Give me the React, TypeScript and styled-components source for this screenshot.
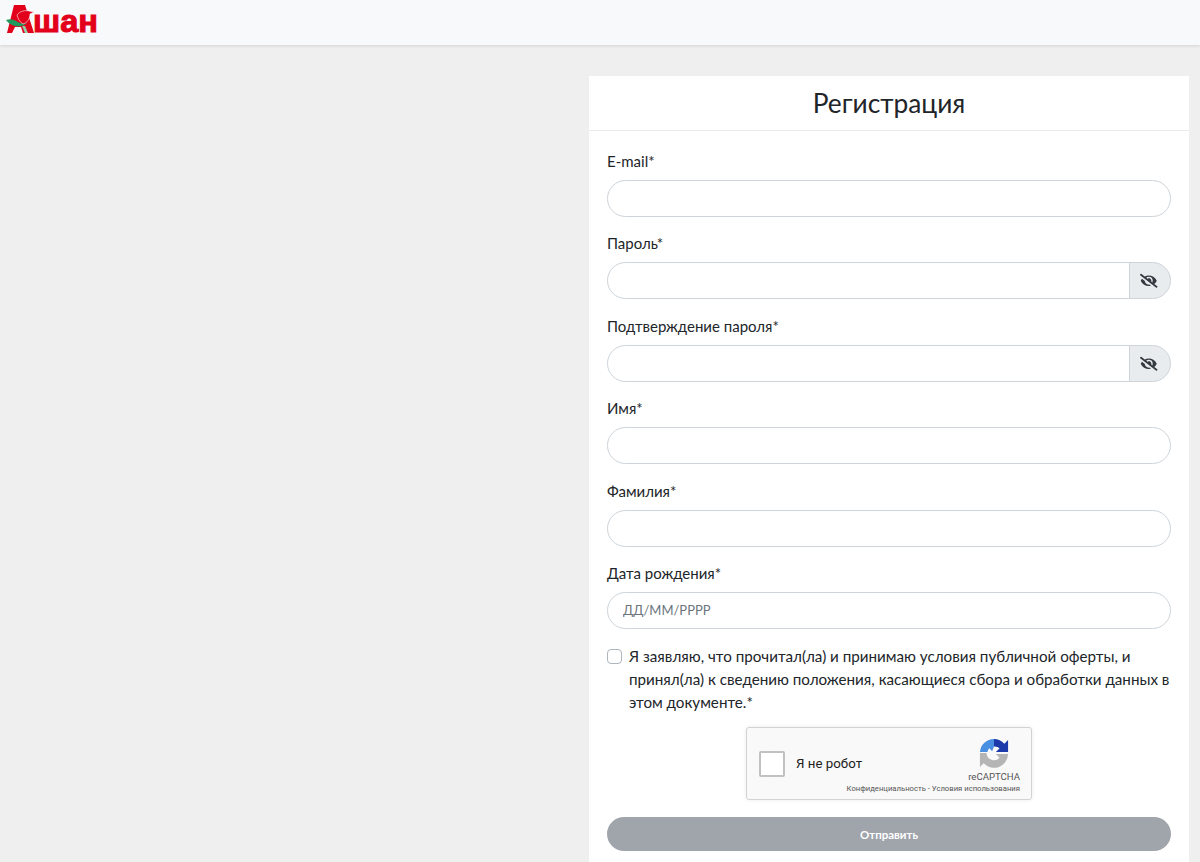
import React from "react";
import styled, { createGlobalStyle } from "styled-components";
import { FaEyeSlash } from "react-icons/fa";

const GlobalStyle = createGlobalStyle`
  html, body {
    margin: 0;
    height: 100%;
    overflow: hidden;
    background: #efefef;
    font-family: "Lato", "Open Sans", "Noto Sans", sans-serif;
    color: #212529;
  }
  * { box-sizing: border-box; }
`;

const Navbar = styled.header`
  height: 45px;
  background: #f8f9fa;
  box-shadow: 0 1px 3px rgba(0, 0, 0, 0.12);
`;

const Page = styled.main`
  display: flex;
  justify-content: flex-end;
  padding: 31px 11px 0 0;
`;

const Card = styled.section`
  width: 600px;
  background: #fff;
`;

const CardHeader = styled.div`
  height: 55px;
  border-bottom: 1px solid #e9ecef;
  display: flex;
  align-items: center;
  justify-content: center;
`;

const Title = styled.h1`
  margin: 0;
  font-size: 26.3px;
  font-weight: 400;
  line-height: 1;
  color: #212529;
`;

const Form = styled.form`
  padding: 20px 18px 24px 18px;
`;

const Field = styled.div`
  margin-bottom: 16.4px;
`;

const Label = styled.label`
  display: block;
  font-size: 15px;
  line-height: 20px;
  margin-bottom: 9px;
`;

const InputRow = styled.div`
  display: flex;
  height: 37px;
`;

const Input = styled.input<{ $joined?: boolean }>`
  flex: 1;
  min-width: 0;
  height: 37px;
  padding: 0 15px;
  border: 1px solid #ced4da;
  border-radius: ${(p) => (p.$joined ? "18.5px 0 0 18.5px" : "18.5px")};
  background: #fff;
  font: inherit;
  font-size: 13px;
  outline: none;
  &::placeholder {
    color: #6c757d;
    opacity: 1;
  }
`;

const EyeButton = styled.span`
  width: 42px;
  height: 37px;
  margin-left: -1px;
  padding-right: 2px;
  display: flex;
  align-items: center;
  justify-content: center;
  background: #e9ecef;
  border: 1px solid #ced4da;
  border-radius: 0 18.5px 18.5px 0;
  color: #343a40;
  font-size: 17.5px;
`;

const Consent = styled.div`
  display: flex;
  gap: 7px;
  margin-top: 15px;
  font-size: 15.2px;
  line-height: 23px;
`;

const Check = styled.span`
  flex: none;
  width: 15px;
  height: 15px;
  margin-top: 4px;
  border: 1px solid #adb5bd;
  border-radius: 4px;
  background: #fff;
`;

const CaptchaWrap = styled.div`
  display: flex;
  justify-content: center;
  margin-top: 13px;
`;

const Captcha = styled.div`
  width: 286px;
  height: 73px;
  background: #f9f9f9;
  border: 1px solid #d3d3d3;
  border-radius: 3px;
  box-shadow: 0 0 4px rgba(0, 0, 0, 0.08);
  display: flex;
  align-items: center;
  padding: 0 11px 0 12px;
  font-family: "Roboto", "Liberation Sans", sans-serif;
`;

const CaptchaBox = styled.span`
  width: 26px;
  height: 26px;
  background: #fff;
  border: 2px solid #c1c1c1;
  border-radius: 2px;
`;

const CaptchaText = styled.span`
  margin-left: 11px;
  font-size: 13.3px;
  color: #222;
  flex: 1;
`;

const CaptchaBrand = styled.div`
  display: flex;
  flex-direction: column;
  align-items: flex-end;
  width: 180px;
  margin-left: -100px;
  padding-top: 5px;
`;

const LogoMark = styled.svg`
  width: 30px;
  height: 30px;
  margin-right: 11px;
`;

const BrandName = styled.span`
  font-size: 9.6px;
  line-height: 13px;
  margin-top: 2px;
  color: #555;
`;

const BrandLinks = styled.span`
  font-size: 7.7px;
  line-height: 12px;
  color: #555;
  white-space: nowrap;
`;

const Submit = styled.button`
  display: block;
  width: 100%;
  height: 34px;
  margin-top: 17px;
  border: none;
  border-radius: 17px;
  background: #a0a5ab;
  color: #fff;
  font: inherit;
  font-size: 11.5px;
  font-weight: 700;
`;

const AuchanLogo = () => (
  <svg width="104" height="42" viewBox="0 0 104 42">
    <polygon points="14,5 25,5 34,33 23,33 21,27 15,27 12,33 7,33 9,25" fill="#e2001a" />
    <path d="M6 20 C11 18 15 20 18 22 C21 24 25 24 27 23 C24 26 19 27 15 26 C11 25 8 23 6 20 Z" fill="#1f9a5c" />
    <path d="M17 15 C20 11 25 10 29 11 L34 12 L30 14 C30 19 27 23 23 24 C20 22 18 19 17 15 Z" fill="#e2001a" stroke="#f8f9fa" strokeWidth="0.6" />
    <path d="M22 26 L25 26 L28 33 L25 33 Z" fill="#8fd0a8" />
    <text x="33" y="32" fontFamily="'Liberation Sans', sans-serif" fontWeight="700" fontSize="31" fill="#e2001a" stroke="#e2001a" strokeWidth="1" textLength="65" lengthAdjust="spacingAndGlyphs">шан</text>
  </svg>
);

const RecaptchaLogo = () => (
  <LogoMark viewBox="0 0 32 32">
    <path d="M16 1 A15 15 0 0 1 27 6 L31 2 V15 H18 L22 11 A8 8 0 0 0 16 9 Z" fill="#1c3aa9" />
    <path d="M16 1 A15 15 0 0 0 1 15 H9 A7 7 0 0 1 11 11 L14 14 L16 9 Z" fill="#4a90e2" />
    <path d="M1 16 H8 A8 8 0 0 0 22 21 L18 17 H31 A15 15 0 0 1 5 27 L1 31 Z" fill="#b5b5b5" />
  </LogoMark>
);

type FieldProps = { label: string; secret?: boolean; placeholder?: string };

const FormField = ({ label, secret, placeholder }: FieldProps) => (
  <Field>
    <Label>{label}</Label>
    <InputRow>
      <Input $joined={secret} placeholder={placeholder} />
      {secret && (
        <EyeButton>
          <FaEyeSlash />
        </EyeButton>
      )}
    </InputRow>
  </Field>
);

const App = () => (
  <>
    <GlobalStyle />
    <Navbar>
      <AuchanLogo />
    </Navbar>
    <Page>
      <Card>
        <CardHeader>
          <Title>Регистрация</Title>
        </CardHeader>
        <Form>
          <FormField label="E-mail*" />
          <FormField label="Пароль*" secret />
          <FormField label="Подтверждение пароля*" secret />
          <FormField label="Имя*" />
          <FormField label="Фамилия*" />
          <FormField label="Дата рождения*" placeholder="ДД/ММ/РРРР" />
          <Consent>
            <Check />
            <span>
              Я заявляю, что прочитал(ла) и принимаю условия публичной оферты, и принял(ла) к сведению положения, касающиеся сбора и обработки данных в этом документе.*
            </span>
          </Consent>
          <CaptchaWrap>
            <Captcha>
              <CaptchaBox />
              <CaptchaText>Я не робот</CaptchaText>
              <CaptchaBrand>
                <RecaptchaLogo />
                <BrandName>reCAPTCHA</BrandName>
                <BrandLinks>Конфиденциальность - Условия использования</BrandLinks>
              </CaptchaBrand>
            </Captcha>
          </CaptchaWrap>
          <Submit type="button">Отправить</Submit>
        </Form>
      </Card>
    </Page>
  </>
);

export default App;
